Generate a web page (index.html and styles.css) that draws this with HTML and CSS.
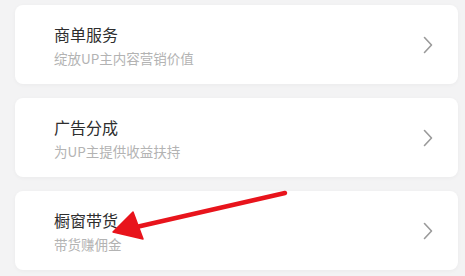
FILE: index.html
```html
<!DOCTYPE html>
<html lang="zh-CN">
<head>
<meta charset="utf-8">
<link rel="stylesheet" href="styles.css">
</head>
<body>
<div class="list">
  <div class="card">
    <div class="text">
      <div class="title">商单服务</div>
      <div class="sub">绽放UP主内容营销价值</div>
    </div>
    <svg class="chev" width="10" height="18" viewBox="0 0 10 18"><path d="M1.5 1.5 L8.5 9 L1.5 16.5" fill="none" stroke="#9a9a9a" stroke-width="1.6" stroke-linecap="round" stroke-linejoin="round"/></svg>
  </div>
  <div class="card">
    <div class="text">
      <div class="title">广告分成</div>
      <div class="sub">为UP主提供收益扶持</div>
    </div>
    <svg class="chev" width="10" height="18" viewBox="0 0 10 18"><path d="M1.5 1.5 L8.5 9 L1.5 16.5" fill="none" stroke="#9a9a9a" stroke-width="1.6" stroke-linecap="round" stroke-linejoin="round"/></svg>
  </div>
  <div class="card">
    <div class="text">
      <div class="title">橱窗带货</div>
      <div class="sub">带货赚佣金</div>
    </div>
    <svg class="chev" width="10" height="18" viewBox="0 0 10 18"><path d="M1.5 1.5 L8.5 9 L1.5 16.5" fill="none" stroke="#9a9a9a" stroke-width="1.6" stroke-linecap="round" stroke-linejoin="round"/></svg>
  </div>
</div>
<svg class="arrow" width="465" height="276" viewBox="0 0 465 276">
  <line x1="285" y1="193" x2="132" y2="228" stroke="#e8141c" stroke-width="4.5" stroke-linecap="round"/>
  <polygon points="113,232 133,212 143,239" fill="#e8141c" stroke="#e8141c" stroke-width="1.5" stroke-linejoin="round"/>
</svg>
</body>
</html>
```
FILE: styles.css
```css
html, body {
  margin: 0;
  padding: 0;
}
body {
  width: 465px;
  height: 276px;
  overflow: hidden;
  background: #f3f3f4;
  font-family: "Noto Sans CJK SC", "Noto Sans", sans-serif;
  position: relative;
}
.list {
  display: flex;
  flex-direction: column;
  gap: 14px;
  padding: 5px 7px 0 15px;
}
.card {
  height: 79px;
  background: #ffffff;
  border-radius: 8px;
  box-shadow: 0 1px 4px rgba(0, 0, 0, 0.04);
  display: flex;
  align-items: center;
  justify-content: space-between;
  padding: 0 25px 0 39px;
  box-sizing: border-box;
}
.text {
  display: flex;
  flex-direction: column;
  padding-top: 1px;
}
.title {
  font-size: 16px;
  line-height: 22px;
  color: #2e2e2e;
  font-weight: 400;
}
.sub {
  margin-top: 4px;
  font-size: 13.5px;
  line-height: 18px;
  color: #b3b3b3;
}
.chev {
  display: block;
}
.arrow {
  position: absolute;
  left: 0;
  top: 0;
}
```
